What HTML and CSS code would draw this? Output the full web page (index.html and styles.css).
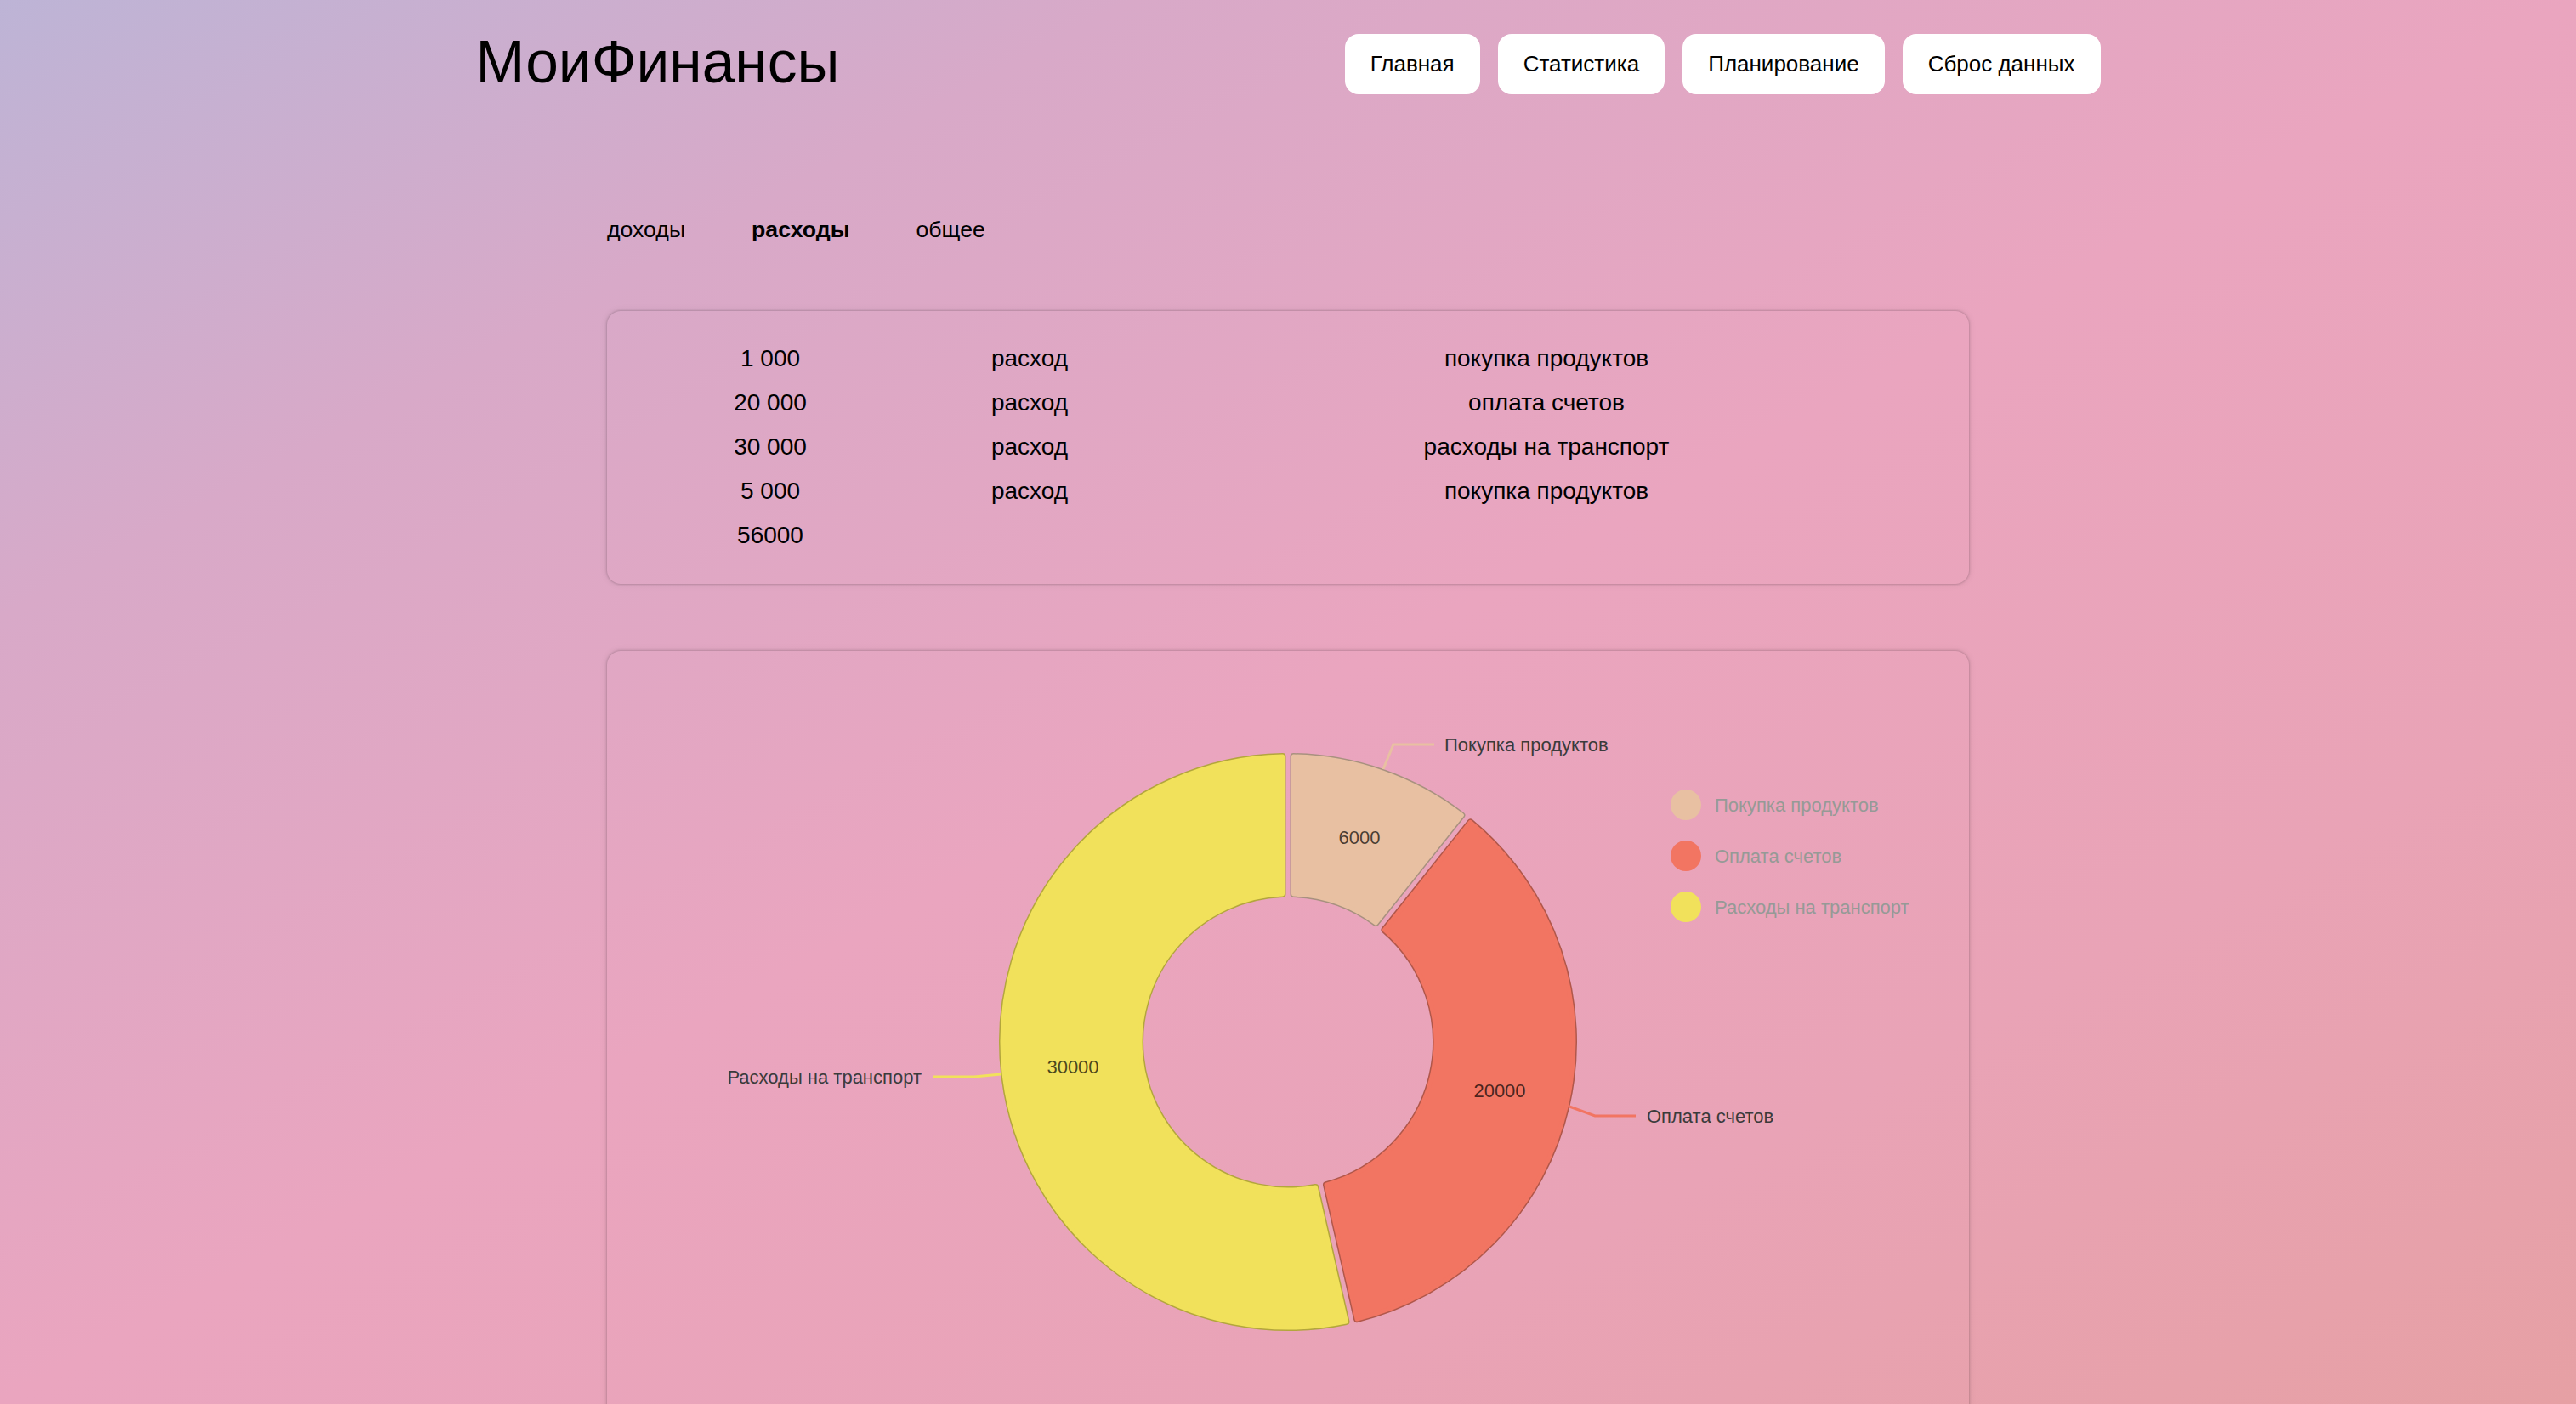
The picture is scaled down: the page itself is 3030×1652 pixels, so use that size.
FILE: index.html
```html
<!DOCTYPE html>
<html lang="ru">
<head>
<meta charset="utf-8">
<title>МоиФинансы</title>
<link rel="stylesheet" href="styles.css">
</head>
<body>
<header class="topbar">
  <h1 class="logo">МоиФинансы</h1>
  <nav class="menu">
    <button class="menu-btn">Главная</button>
    <button class="menu-btn">Статистика</button>
    <button class="menu-btn">Планирование</button>
    <button class="menu-btn">Сброс данных</button>
  </nav>
</header>
<main class="content">
  <div class="tabs">
    <span class="tab">доходы</span>
    <span class="tab tab-active">расходы</span>
    <span class="tab">общее</span>
  </div>
  <section class="card table-card">
    <div class="row"><span class="cell">1 000</span><span class="cell">расход</span><span class="cell">покупка продуктов</span></div>
    <div class="row"><span class="cell">20 000</span><span class="cell">расход</span><span class="cell">оплата счетов</span></div>
    <div class="row"><span class="cell">30 000</span><span class="cell">расход</span><span class="cell">расходы на транспорт</span></div>
    <div class="row"><span class="cell">5 000</span><span class="cell">расход</span><span class="cell">покупка продуктов</span></div>
    <div class="row"><span class="cell">56000</span></div>
  </section>
  <section class="card chart-card">
    <svg class="chart" width="1602" height="920" viewBox="0 0 1602 920">
      <g transform="translate(801 460)">
        <g class="slice">
          <path class="edge edge-peach" d="M 6.50 -335.94 A 336 336 0 0 1 204.37 -266.70 L 103.33 -140.00 A 174 174 0 0 0 6.50 -173.88 Z"/>
          <path class="body body-peach" d="M 6.50 -335.94 A 336 336 0 0 1 204.37 -266.70 L 103.33 -140.00 A 174 174 0 0 0 6.50 -173.88 Z"/>
        </g>
        <g class="slice">
          <path class="edge edge-red" d="M 214.54 -258.59 A 336 336 0 0 1 81.09 326.07 L 45.03 168.07 A 174 174 0 0 0 113.49 -131.89 Z"/>
          <path class="body body-red" d="M 214.54 -258.59 A 336 336 0 0 1 81.09 326.07 L 45.03 168.07 A 174 174 0 0 0 113.49 -131.89 Z"/>
        </g>
        <g class="slice">
          <path class="edge edge-yellow" d="M 68.42 328.96 A 336 336 0 1 1 -6.50 -335.94 L -6.50 -173.88 A 174 174 0 1 0 32.36 170.97 Z"/>
          <path class="body body-yellow" d="M 68.42 328.96 A 336 336 0 1 1 -6.50 -335.94 L -6.50 -173.88 A 174 174 0 1 0 32.36 170.97 Z"/>
        </g>
      </g>
      <polyline class="leader leader-peach" points="913,139 925,110 973,110"/>
      <polyline class="leader leader-red" points="1132,536 1162,547 1210,547"/>
      <polyline class="leader leader-yellow" points="463,498 432,501 384,501"/>
      <text class="outer-label" x="985" y="110">Покупка продуктов</text>
      <text class="outer-label" x="1223" y="547">Оплата счетов</text>
      <text class="outer-label outer-label-left" x="370" y="501">Расходы на транспорт</text>
      <text class="value-label" x="885" y="219">6000</text>
      <text class="value-label" x="1050" y="517">20000</text>
      <text class="value-label" x="548" y="489">30000</text>
      <circle class="dot-peach" cx="1269" cy="181" r="18"/>
      <circle class="dot-red" cx="1269" cy="241" r="18"/>
      <circle class="dot-yellow" cx="1269" cy="301" r="18"/>
      <text class="legend-label" x="1303" y="181">Покупка продуктов</text>
      <text class="legend-label" x="1303" y="241">Оплата счетов</text>
      <text class="legend-label" x="1303" y="301">Расходы на транспорт</text>
    </svg>
  </section>
</main>
</body>
</html>
```
FILE: styles.css
```css
html {
  overflow: hidden;
}

body {
  margin: 0;
  min-height: 100vh;
  font-family: "Liberation Sans", Arial, sans-serif;
  color: #000;
  background: linear-gradient(to bottom right, #bdb4d6 0%, #d8a9c8 22%, #eaa5bf 50%, #e9a3b6 75%, #e6a0a4 100%) fixed;
}

.topbar {
  width: 1911px;
  margin: 0 auto;
  padding-top: 40px;
  display: flex;
  justify-content: space-between;
  align-items: center;
}

.logo {
  margin: 0 0 4px;
  font-size: 69.5px;
  font-weight: 400;
  line-height: 67px;
}

.menu {
  display: flex;
  gap: 21px;
}

.menu-btn {
  font-family: "Liberation Sans", Arial, sans-serif;
  font-size: 26px;
  line-height: 30.67px;
  padding: 20px 30px;
  border: 0;
  border-radius: 16px;
  background: #fff;
  color: #000;
}

.content {
  width: 1602px;
  margin: 0 auto;
}

.tabs {
  margin-top: 144px;
  display: flex;
  gap: 78px;
  font-size: 26.67px;
  line-height: 30.67px;
}

.tab-active {
  font-weight: 700;
}

.card {
  border-radius: 16px;
  box-shadow: 0 0 3px rgba(0, 0, 0, 0.28), 0 0 8px rgba(0, 0, 0, 0.1);
}

.table-card {
  margin-top: 80px;
  padding: 30px 0;
}

.row {
  display: grid;
  grid-template-columns: 190px 420px 796px;
  margin-left: 97px;
  height: 52.2px;
  line-height: 52.2px;
  font-size: 28px;
  text-align: center;
}

.chart-card {
  margin-top: 79px;
  height: 920px;
}

.chart {
  display: block;
  font-family: "Liberation Sans", Arial, sans-serif;
}

.edge {
  stroke-width: 8;
  stroke-linejoin: round;
}

.body {
  stroke-width: 5;
  stroke-linejoin: round;
}

.edge-peach { fill: #a8917f; stroke: #a8917f; }
.edge-red { fill: #b0574a; stroke: #b0574a; }
.edge-yellow { fill: #b3a63c; stroke: #b3a63c; }
.body-peach { fill: #e8c0a2; stroke: #e8c0a2; }
.body-red { fill: #f27562; stroke: #f27562; }
.body-yellow { fill: #f1e15b; stroke: #f1e15b; }

.leader {
  fill: none;
  stroke-width: 3;
}

.leader-peach { stroke: #e8c0a2; }
.leader-red { stroke: #f27562; }
.leader-yellow { stroke: #f1e15b; }

.outer-label {
  font-size: 22px;
  fill: #3b3b3b;
  dominant-baseline: central;
}

.outer-label-left {
  text-anchor: end;
}

.value-label {
  font-size: 22px;
  fill: rgba(0, 0, 0, 0.7);
  text-anchor: middle;
  dominant-baseline: central;
}

.dot-peach { fill: #e8c0a2; }
.dot-red { fill: #f27562; }
.dot-yellow { fill: #f1e15b; }

.legend-label {
  font-size: 22px;
  fill: #969a96;
  dominant-baseline: central;
}
```
